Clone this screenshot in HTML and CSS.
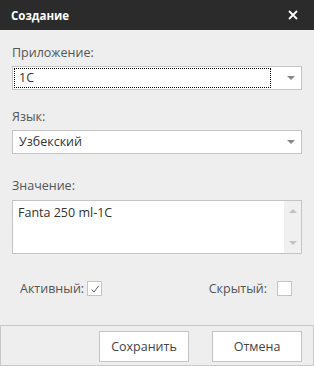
FILE: index.html
```html
<!DOCTYPE html>
<html lang="ru">
<head>
    <meta charset="UTF-8">
    <title>Создание</title>
    <link rel="stylesheet" href="styles.css">
</head>
<body>
    <div class="dialog">
        <div class="dialog-header">
            <span class="dialog-title">Создание</span>
            <span class="dialog-close">
                <svg width="10" height="10" viewBox="0 0 10 10"><path d="M1 1 L9 9 M9 1 L1 9" stroke="#fff" stroke-width="1.8"/></svg>
            </span>
        </div>

        <div class="dialog-body">
            <div class="field">
                <label>Приложение:</label>
                <div class="combo">
                    <span class="combo-value focused">1C</span>
                    <span class="combo-arrow"></span>
                </div>
            </div>

            <div class="field">
                <label>Язык:</label>
                <div class="combo">
                    <span class="combo-value">Узбекский</span>
                    <span class="combo-arrow"></span>
                </div>
            </div>

            <div class="field field-memo">
                <label>Значение:</label>
                <div class="memo">
                    <div class="memo-text">Fanta 250 ml-1C</div>
                    <div class="memo-scroll">
                        <span class="arrow-up"></span>
                        <span class="arrow-down"></span>
                    </div>
                </div>
            </div>

            <div class="flags">
                <div class="flag">
                    <span>Активный:</span>
                    <span class="check">
                        <svg width="10" height="10" viewBox="0 0 10 10"><path d="M1.5 5.5 L4 8 L8.5 2" fill="none" stroke="#666" stroke-width="1"/></svg>
                    </span>
                </div>
                <div class="flag flag-wide">
                    <span>Скрытый:</span>
                    <span class="check"></span>
                </div>
            </div>
        </div>

        <div class="dialog-footer">
            <button type="button">Сохранить</button>
            <button type="button">Отмена</button>
        </div>
    </div>
</body>
</html>
```

FILE: styles.css
```css
body {
    margin: 0;
    font-family: "Open Sans", "Noto Sans", sans-serif;
    font-size: 12.5px;
    color: #444;
    background-color: #eeeeee;
}

.dialog {
    width: 314px;
    height: 366px;
    display: flex;
    flex-direction: column;
    background-color: #eeeeee;
}

.dialog-header {
    height: 30px;
    background-color: #2b2b2b;
    display: flex;
    align-items: center;
    justify-content: space-between;
    padding: 0 16px 0 11px;
    flex-shrink: 0;
}

.dialog-title {
    color: #fff;
    font-weight: bold;
    font-size: 11.5px;
}

.dialog-close {
    display: flex;
}

.dialog-body {
    flex: 1;
    padding: 14px 12px 0;
}

.field {
    margin-bottom: 18px;
}

.field-memo {
    margin-top: 23px;
}

.field label {
    display: block;
    height: 18px;
    line-height: 18px;
    margin-bottom: 4px;
    color: #555;
}

.field-memo label {
    margin-bottom: 5px;
}

.combo {
    height: 22px;
    border: 1px solid #c4c4c4;
    background-color: #fff;
    display: flex;
    align-items: center;
    padding: 0 1px;
}

.combo-value {
    flex: 1;
    height: 18px;
    line-height: 18px;
    padding-left: 4px;
    color: #333;
    border: 1px solid transparent;
    margin-right: 16px;
}

.combo-value.focused {
    border: 1px dotted #000;
}

.combo-arrow {
    width: 0;
    height: 0;
    border-left: 4px solid transparent;
    border-right: 4px solid transparent;
    border-top: 4px solid #888;
    margin-right: 5px;
}

.memo {
    height: 52px;
    border: 1px solid #c4c4c4;
    background-color: #fff;
    display: flex;
}

.memo-text {
    flex: 1;
    padding: 3px 5px;
    color: #333;
    line-height: 18px;
}

.memo-scroll {
    width: 17px;
    background-color: #f0f0f0;
    display: flex;
    flex-direction: column;
    justify-content: space-between;
    align-items: center;
    padding: 8px 0;
}

.arrow-up {
    width: 0;
    height: 0;
    border-left: 4px solid transparent;
    border-right: 4px solid transparent;
    border-bottom: 4px solid #c2c2c2;
}

.arrow-down {
    width: 0;
    height: 0;
    border-left: 4px solid transparent;
    border-right: 4px solid transparent;
    border-top: 4px solid #c2c2c2;
}

.flags {
    display: flex;
    justify-content: space-between;
    padding: 8px 10px 0 8px;
}

.flag {
    display: flex;
    align-items: center;
    gap: 3px;
    color: #555;
}

.flag-wide {
    gap: 10px;
}

.check {
    width: 13px;
    height: 13px;
    border: 1px solid #c4c4c4;
    background-color: #fff;
    display: flex;
    align-items: center;
    justify-content: center;
}

.dialog-footer {
    height: 34px;
    border: 1px solid #c8c8c8;
    display: flex;
    justify-content: flex-end;
    gap: 23px;
    padding: 5px 11px 0 0;
    flex-shrink: 0;
}

.dialog-footer button {
    width: 90px;
    height: 31px;
    background-color: #fff;
    border: 1px solid #c4c4c4;
    font-family: "Open Sans", "Noto Sans", sans-serif;
    font-size: 12.5px;
    color: #444;
    padding: 0;
}
```
